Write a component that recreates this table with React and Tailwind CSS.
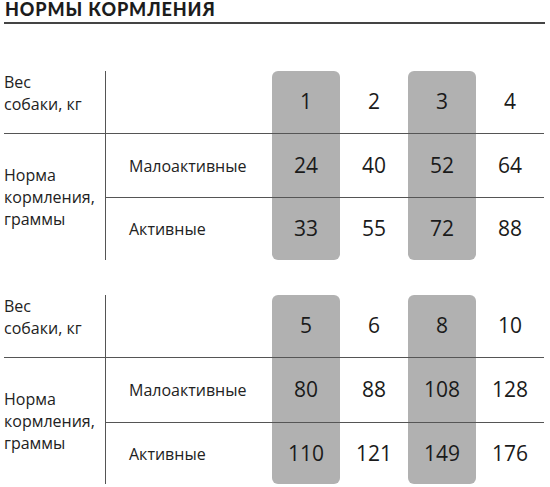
const tables = [
  { weights: ['1', '2', '3', '4'], low: ['24', '40', '52', '64'], high: ['33', '55', '72', '88'] },
  { weights: ['5', '6', '8', '10'], low: ['80', '88', '108', '128'], high: ['110', '121', '149', '176'] },
]

const gray = [true, false, true, false]

function FeedTable({ weights, low, high, rows }) {
  return (
    <div className={`grid grid-cols-[101px_167px_68px_68px_68px_68px] ${rows}`}>
      <div className="row-start-1 col-start-1 text-[16px] leading-[22px] text-[#222]">
        Вес
        <br />
        собаки, кг
      </div>
      <div className="row-start-1 col-start-2 border-l border-[#555]" />
      {weights.map((w, i) => (
        <div
          key={'w' + i}
          className={`row-start-1 flex items-center justify-center text-[21px] text-[#1a1a1a] ${
            gray[i] ? 'rounded-t-[6px] bg-[#b1b1b1]' : ''
          }`}
        >
          {w}
        </div>
      ))}

      <div className="row-span-2 row-start-2 col-start-1 flex items-center border-t border-[#555] text-[16px] leading-[22px] text-[#222]">
        <div>
          Норма
          <br />
          кормления,
          <br />
          граммы
        </div>
      </div>
      <div className="row-start-2 col-start-2 flex items-center border-t border-l border-[#555] pl-[23px] text-[16px] text-[#222]">
        Малоактивные
      </div>
      {low.map((v, i) => (
        <div
          key={'l' + i}
          className={`row-start-2 flex items-center justify-center border-t border-[#555] text-[21px] text-[#1a1a1a] ${
            gray[i] ? 'bg-[#b1b1b1]' : ''
          }`}
        >
          {v}
        </div>
      ))}

      <div className="row-start-3 col-start-2 flex items-center border-t border-l border-[#555] pl-[23px] text-[16px] text-[#222]">
        Активные
      </div>
      {high.map((v, i) => (
        <div
          key={'h' + i}
          className={`row-start-3 flex items-center justify-center border-t border-[#555] text-[21px] text-[#1a1a1a] ${
            gray[i] ? 'rounded-b-[6px] bg-[#b1b1b1]' : ''
          }`}
        >
          {v}
        </div>
      ))}
    </div>
  )
}

export default function App() {
  return (
    <div className="h-[487px] w-[550px] overflow-hidden bg-white pl-[4px] font-['Open_Sans',sans-serif]">
      <div className="w-[541px] border-b-2 border-[#444] pb-[3px]">
        <h1 className="pl-[1px] font-['Lato',sans-serif] text-[18px] font-black leading-[19px] tracking-[0.05em] text-[#1c1c1c]">
          НОРМЫ КОРМЛЕНИЯ
        </h1>
      </div>
      <div className="mt-[47px]">
        <FeedTable {...tables[0]} rows="grid-rows-[62px_64px_63px]" />
      </div>
      <div className="mt-[35px]">
        <FeedTable {...tables[1]} rows="grid-rows-[62px_65px_62px]" />
      </div>
    </div>
  )
}
